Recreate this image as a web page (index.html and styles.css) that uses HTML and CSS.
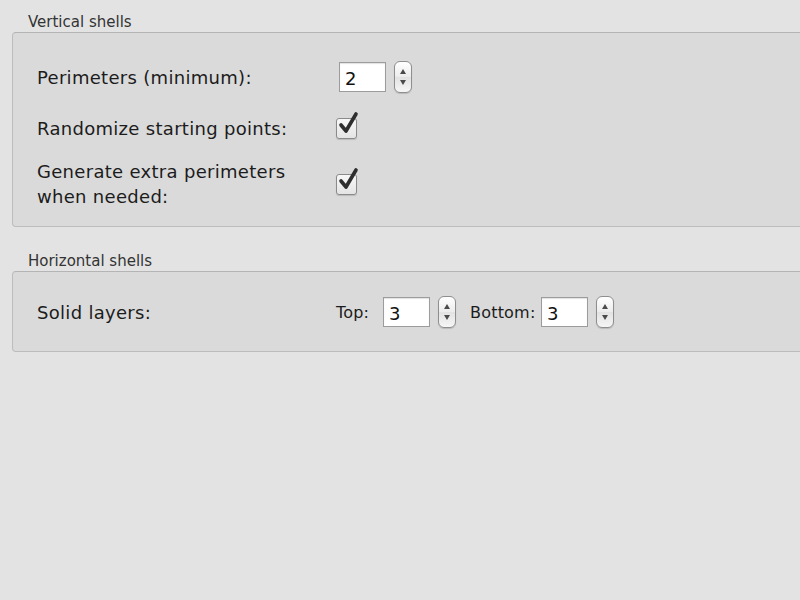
FILE: index.html
```html
<!DOCTYPE html>
<html lang="en">
<head>
    <meta charset="UTF-8">
    <title>Layers and perimeters</title>
    <link rel="stylesheet" href="styles.css">
</head>
<body>
    <section class="group">
        <div class="group-title">Vertical shells</div>
        <div class="panel panel-vertical">
            <div class="row">
                <label class="label">Perimeters (minimum):</label>
                <div class="control">
                    <input class="spin-field" type="text" value="2">
                    <span class="stepper"><i class="up"></i><i class="down"></i></span>
                </div>
            </div>
            <div class="row">
                <label class="label">Randomize starting points:</label>
                <div class="control">
                    <span class="check">
                        <svg viewBox="0 0 24 26" width="24" height="26"><path d="M5 14 L10 20 L20 3" fill="none" stroke="#2e2e2e" stroke-width="3.6" stroke-linecap="round" stroke-linejoin="round"/></svg>
                    </span>
                </div>
            </div>
            <div class="row">
                <label class="label">Generate extra perimeters<br>when needed:</label>
                <div class="control">
                    <span class="check">
                        <svg viewBox="0 0 24 26" width="24" height="26"><path d="M5 14 L10 20 L20 3" fill="none" stroke="#2e2e2e" stroke-width="3.6" stroke-linecap="round" stroke-linejoin="round"/></svg>
                    </span>
                </div>
            </div>
        </div>
    </section>

    <section class="group">
        <div class="group-title">Horizontal shells</div>
        <div class="panel panel-horizontal">
            <div class="row">
                <label class="label">Solid layers:</label>
                <div class="control">
                    <span class="small-label">Top:</span>
                    <input class="spin-field" type="text" value="3">
                    <span class="stepper"><i class="up"></i><i class="down"></i></span>
                    <span class="small-label bottom-label">Bottom:</span>
                    <input class="spin-field" type="text" value="3">
                    <span class="stepper"><i class="up"></i><i class="down"></i></span>
                </div>
            </div>
        </div>
    </section>
</body>
</html>
```

FILE: styles.css
```css
* {
    margin: 0;
    padding: 0;
    box-sizing: border-box;
}

body {
    font-family: "DejaVu Sans", "Liberation Sans", sans-serif;
    background: #e3e3e3;
    color: #1c1c1c;
    padding-top: 12px;
    overflow: hidden;
}

.group {
    margin-left: 12px;
    margin-right: -20px;
    margin-bottom: 24px;
}

.group-title {
    font-size: 15px;
    color: #333;
    padding-left: 16px;
    padding-top: 2px;
    height: 20px;
    line-height: 17px;
}

.panel {
    background: #dadada;
    border: 1px solid #bcbcbc;
    border-top-color: #b4b4b4;
    border-radius: 4px;
    padding: 0 24px;
}

.panel-vertical {
    height: 195px;
    padding-top: 28px;
}

.panel-horizontal {
    height: 81px;
    padding-top: 24px;
}

.row {
    display: flex;
    align-items: center;
    margin-bottom: 18px;
}

.panel-vertical .row:first-child {
    margin-bottom: 23px;
}

.label {
    width: 299px;
    font-size: 18px;
    line-height: 25px;
    letter-spacing: 0.3px;
}

.control {
    display: flex;
    align-items: center;
}

.spin-field {
    width: 47px;
    height: 30px;
    margin-left: 3px;
    border: 1px solid #9c9c9c;
    box-shadow: inset 0 1px 1px rgba(0, 0, 0, 0.12);
    background: #fff;
    font-family: "DejaVu Sans", sans-serif;
    font-size: 18px;
    color: #111;
    padding: 2px 0 0 5px;
    outline: none;
}

.stepper {
    width: 18px;
    height: 32px;
    margin-left: 8px;
    border: 1px solid #8e8e8e;
    border-radius: 6px;
    background: linear-gradient(#ffffff, #ececec 50%, #e2e2e2 51%, #f6f6f6);
    box-shadow: 0 1px 1px rgba(0, 0, 0, 0.15);
    display: flex;
    flex-direction: column;
    align-items: center;
    justify-content: space-between;
    padding: 7px 0 7px;
}

.stepper i {
    width: 0;
    height: 0;
    border-left: 3.5px solid transparent;
    border-right: 3.5px solid transparent;
}

.stepper .up {
    border-bottom: 5px solid #4a4a4a;
}

.stepper .down {
    border-top: 5px solid #4a4a4a;
}

.check {
    position: relative;
    width: 21px;
    height: 21px;
    border: 1px solid #8a8a8a;
    border-radius: 3px;
    background: linear-gradient(#f8f8f8, #e4e4e4);
    box-shadow: 0 1px 1px rgba(0, 0, 0, 0.15);
}

.check svg {
    position: absolute;
    left: -1px;
    top: -8px;
}

.small-label {
    width: 44px;
    font-size: 16px;
    letter-spacing: 0.2px;
}

.bottom-label {
    width: 68px;
    margin-left: 14px;
}
```
